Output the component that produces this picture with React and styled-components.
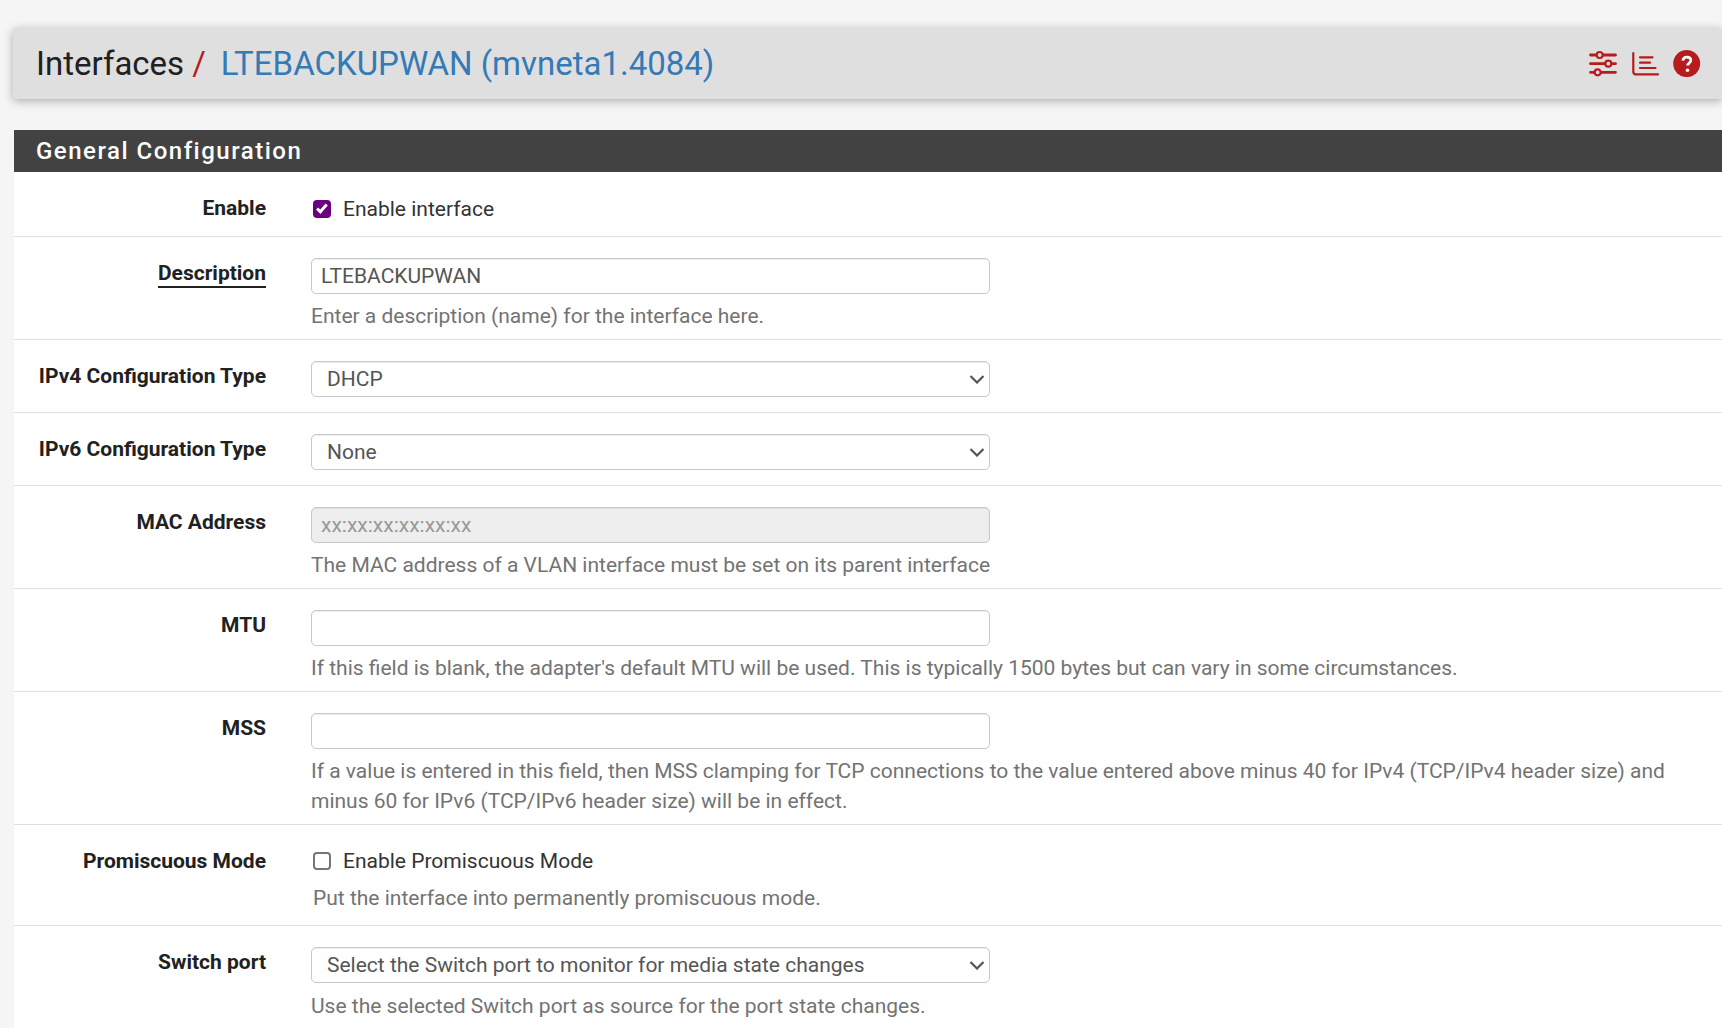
import React from "react";
import styled, { createGlobalStyle } from "styled-components";

const GlobalStyle = createGlobalStyle`
  html, body {
    margin: 0;
    padding: 0;
    height: 100%;
    overflow: hidden;
    background: #f5f5f5;
    font-family: Roboto, "Liberation Sans", sans-serif;
    color: #212121;
  }
`;

const Page = styled.div`
  height: 1028px;
  padding: 28px 0 0 13px;
  box-sizing: border-box;
  overflow: hidden;
`;

const Header = styled.header`
  height: 71px;
  display: flex;
  align-items: center;
  justify-content: space-between;
  padding: 0 21px 0 23px;
  background: #dfdfdf;
  border-radius: 3px 0 0 3px;
  box-shadow: 0 2px 10px rgba(0, 0, 0, 0.3);
`;

const Crumbs = styled.h1`
  margin: 0;
  font-size: 33px;
  font-weight: 400;
  color: #212121;
  display: flex;
`;

const Slash = styled.span`
  color: #b71c1c;
  margin: 0 15px 0 8px;
`;

const CrumbLink = styled.a`
  color: #337ab7;
  text-decoration: none;
`;

const Tools = styled.div`
  display: flex;
  align-items: center;
  gap: 14px;
`;

const Panel = styled.section`
  margin: 31px 0 0 1px;
  background: #fff;
`;

const PanelTitle = styled.h2`
  margin: 0;
  height: 42px;
  line-height: 42px;
  padding-left: 22px;
  background: #424242;
  color: #fff;
  font-size: 24px;
  font-weight: 500;
  letter-spacing: 1.5px;
`;

const Row = styled.div`
  display: grid;
  grid-template-columns: 252px 679px;
  column-gap: 45px;
  padding: 21px 0 0;
  min-height: ${(p) => p.$height}px;
  box-sizing: border-box;
  border-bottom: 1px solid #e0e0e0;
`;

const WideRow = styled(Row)`
  grid-template-columns: 252px 1fr;
`;

const Label = styled.label`
  text-align: right;
  font-size: 21px;
  font-weight: 700;
  line-height: 30px;
  color: #212121;
`;

const Underlined = styled.span`
  border-bottom: 2px solid #212121;
  padding-bottom: 1px;
`;

const Field = styled.div`
  min-width: 0;
`;

const TextInput = styled.input`
  display: block;
  width: 679px;
  height: 36px;
  box-sizing: border-box;
  padding: 0 9px;
  border: 1px solid #c8c8c8;
  border-radius: 5px;
  box-shadow: inset 0 1px 1px rgba(0, 0, 0, 0.075);
  background: ${(p) => (p.disabled ? "#eeeeee" : "#fff")};
  font-family: inherit;
  font-size: 21px;
  color: #555;
  outline: none;

  &::placeholder {
    color: #999;
  }
`;

const SelectWrap = styled.div`
  position: relative;
  width: 679px;
  height: 36px;
`;

const Select = styled.select`
  appearance: none;
  display: block;
  width: 100%;
  height: 36px;
  box-sizing: border-box;
  padding: 0 15px;
  border: 1px solid #c8c8c8;
  border-radius: 5px;
  box-shadow: inset 0 1px 1px rgba(0, 0, 0, 0.075);
  background: #fff;
  font-family: inherit;
  font-size: 21px;
  color: #555;
  outline: none;
`;

const Chevron = styled.svg`
  position: absolute;
  top: 14px;
  right: 5px;
  pointer-events: none;
`;

const Help = styled.p`
  margin: ${(p) => p.$gap || 7}px 0 0;
  font-size: 21px;
  line-height: 30px;
  color: #737373;
`;

const IndentHelp = styled(Help)`
  margin-left: 2px;
`;

const CheckLine = styled.label`
  display: flex;
  align-items: center;
  height: 30px;
  margin-top: ${(p) => p.$offset || 0}px;
  font-size: 21px;
  color: #333;
`;

const Check = styled.input`
  appearance: none;
  position: relative;
  box-sizing: border-box;
  width: 18px;
  height: 18px;
  margin: 0 12px 0 2px;
  border: 2px solid #767676;
  border-radius: 4px;
  background: #fff;

  &:checked {
    border-color: #6a0080;
    background: #6a0080;
  }

  &:checked::after {
    content: "";
    position: absolute;
    left: 3.8px;
    top: 0.3px;
    width: 5.5px;
    height: 11px;
    box-sizing: border-box;
    border: solid #fff;
    border-width: 0 3px 3px 0;
    transform: rotate(42deg);
  }
`;

const SelectField = ({ value, children }) => (
  <SelectWrap>
    <Select defaultValue={value}>{children}</Select>
    <Chevron width="16" height="9" viewBox="0 0 16 9" fill="none" stroke="#555" strokeWidth="2.2">
      <path d="M1.500 1l6.500 6.500L14.500 1" />
    </Chevron>
  </SelectWrap>
);

const SlidersIcon = () => (
  <svg width="28" height="27" viewBox="0 0 28 27" fill="none" stroke="#b71c1c" strokeWidth="2.8" strokeLinecap="round">
    <path d="M1.500 5h25M1.500 13.700h25M1.500 22.300h25" />
    <circle cx="10.700" cy="5" r="3" fill="#dfdfdf" strokeWidth="2.200" />
    <circle cx="19.300" cy="13.700" r="3" fill="#dfdfdf" strokeWidth="2.200" />
    <circle cx="8.700" cy="22.300" r="3" fill="#dfdfdf" strokeWidth="2.200" />
  </svg>
);

const ChartIcon = () => (
  <svg width="28" height="27" viewBox="0 0 28 27" fill="none" stroke="#b71c1c" strokeWidth="2.200" strokeLinecap="round">
    <path d="M2.300 3v19a2.300 2.300 0 0 0 2.300 2.300H27" />
    <path d="M9 7.300h12.500M9 12.700h10M9 18h15.500" />
  </svg>
);

const HelpIcon = () => (
  <svg width="28" height="27" viewBox="0 0 28 27">
    <circle cx="13.700" cy="13.600" r="13.500" fill="#b71c1c" />
    <path
      d="M9.800 10.600c.3-2.300 1.900-3.500 4.100-3.500 2.300 0 3.900 1.300 3.900 3.200 0 1.500-.9 2.300-1.900 3-1 .7-1.300 1.100-1.300 2.200"
      fill="none"
      stroke="#fff"
      strokeWidth="2.800"
    />
    <circle cx="14.500" cy="20.200" r="1.800" fill="#fff" />
  </svg>
);

const App = () => {
  return (
    <Page>
      <GlobalStyle />
      <Header>
        <Crumbs>
          Interfaces
          <Slash>/</Slash>
          <CrumbLink href="#">LTEBACKUPWAN (mvneta1.4084)</CrumbLink>
        </Crumbs>
        <Tools>
          <SlidersIcon />
          <ChartIcon />
          <HelpIcon />
        </Tools>
      </Header>

      <Panel>
        <PanelTitle>General Configuration</PanelTitle>

        <Row $height={65}>
          <Label>Enable</Label>
          <CheckLine $offset={1}>
            <Check type="checkbox" defaultChecked />
            Enable interface
          </CheckLine>
        </Row>

        <Row $height={103}>
          <Label>
            <Underlined>Description</Underlined>
          </Label>
          <Field>
            <TextInput type="text" defaultValue="LTEBACKUPWAN" />
            <Help>Enter a description (name) for the interface here.</Help>
          </Field>
        </Row>

        <Row $height={73}>
          <Label>IPv4 Configuration Type</Label>
          <SelectField value="dhcp">
            <option value="dhcp">DHCP</option>
          </SelectField>
        </Row>

        <Row $height={73}>
          <Label>IPv6 Configuration Type</Label>
          <SelectField value="none">
            <option value="none">None</option>
          </SelectField>
        </Row>

        <WideRow $height={103}>
          <Label>MAC Address</Label>
          <Field>
            <TextInput type="text" placeholder="xx:xx:xx:xx:xx:xx" disabled />
            <Help>The MAC address of a VLAN interface must be set on its parent interface</Help>
          </Field>
        </WideRow>

        <WideRow $height={103}>
          <Label>MTU</Label>
          <Field>
            <TextInput type="text" />
            <Help>
              If this field is blank, the adapter's default MTU will be used. This is typically 1500 bytes but can vary
              in some circumstances.
            </Help>
          </Field>
        </WideRow>

        <WideRow $height={133}>
          <Label>MSS</Label>
          <Field>
            <TextInput type="text" />
            <Help>
              If a value is entered in this field, then MSS clamping for TCP connections to the value entered above
              minus 40 for IPv4 (TCP/IPv4 header size) and
              <br />
              minus 60 for IPv6 (TCP/IPv6 header size) will be in effect.
            </Help>
          </Field>
        </WideRow>

        <Row $height={101}>
          <Label>Promiscuous Mode</Label>
          <Field>
            <CheckLine>
              <Check type="checkbox" />
              Enable Promiscuous Mode
            </CheckLine>
            <IndentHelp>Put the interface into permanently promiscuous mode.</IndentHelp>
          </Field>
        </Row>

        <Row $height={103}>
          <Label>Switch port</Label>
          <Field>
            <SelectField value="">
              <option value="">Select the Switch port to monitor for media state changes</option>
            </SelectField>
            <Help $gap={8}>Use the selected Switch port as source for the port state changes.</Help>
          </Field>
        </Row>
      </Panel>
    </Page>
  );
};

export default App;
